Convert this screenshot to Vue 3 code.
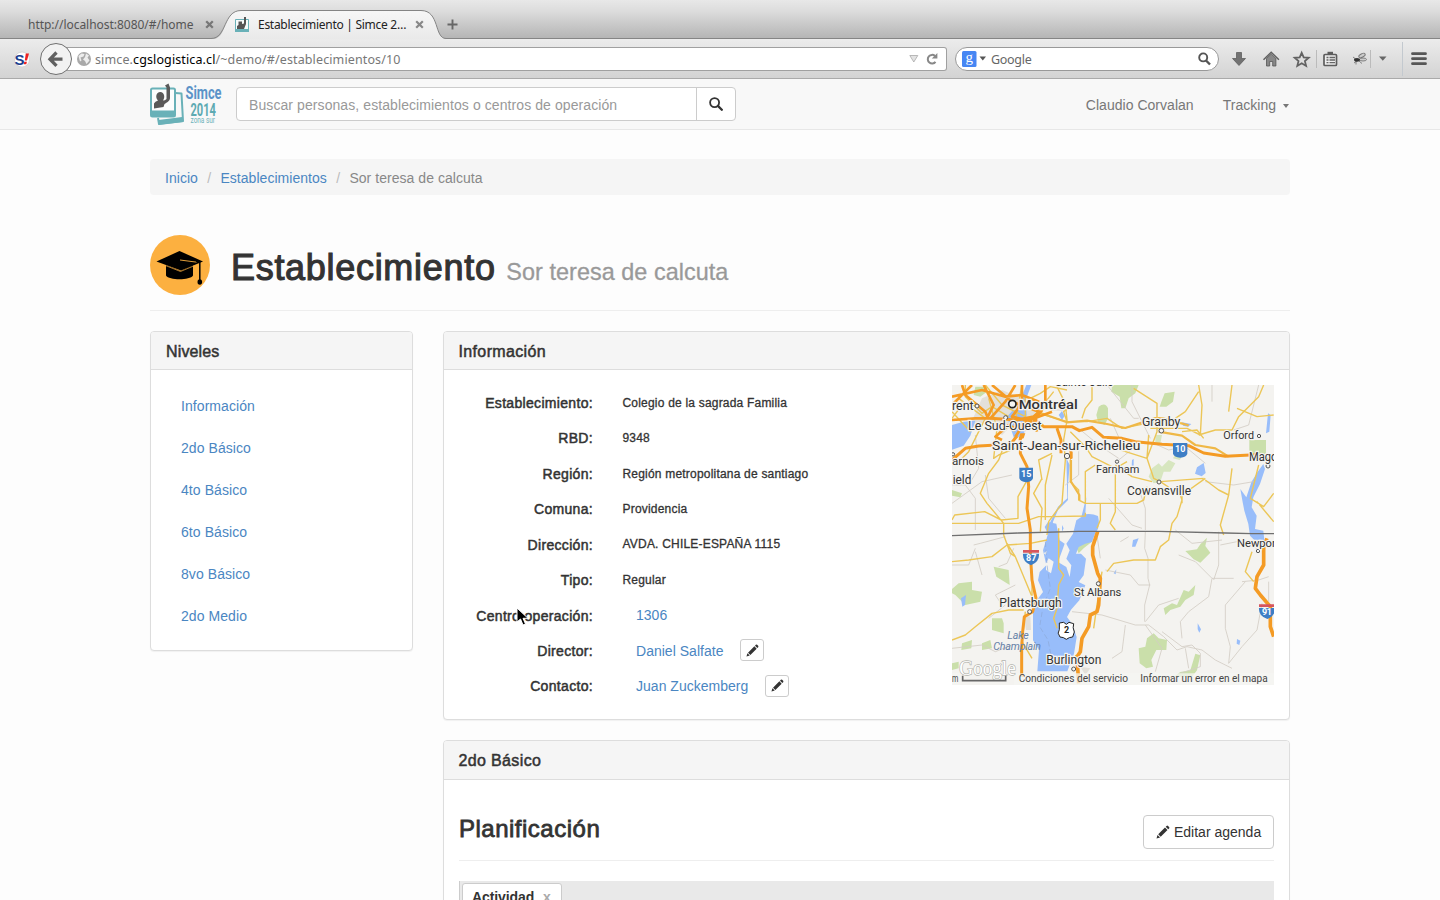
<script setup>
const levels = ['Información', '2do Básico', '4to Básico', '6to Básico', '8vo Básico', '2do Medio']
const facts = [
  { label: 'Establecimiento:', value: 'Colegio de la sagrada Familia' },
  { label: 'RBD:', value: '9348' },
  { label: 'Región:', value: 'Región metropolitana de santiago' },
  { label: 'Comuna:', value: 'Providencia' },
  { label: 'Dirección:', value: 'AVDA. CHILE-ESPAÑA 1115' },
  { label: 'Tipo:', value: 'Regular' },
  { label: 'Centro operación:', link: '1306' },
  { label: 'Director:', link: 'Daniel Salfate', edit: true },
  { label: 'Contacto:', link: 'Juan Zuckemberg', edit: true },
]
</script>

<template>
  <div class="screen">
    <header class="chrome">
      <div class="tabs">
        <svg class="tabshape" width="240" height="40" viewBox="0 0 240 40">
          <defs>
            <linearGradient id="tabfill" x1="0" y1="0" x2="0" y2="1">
              <stop offset="0" stop-color="#f7f7f7" /><stop offset="1" stop-color="#e9e9e9" />
            </linearGradient>
          </defs>
          <path d="M0 39.5V38.500H8C21 38.500 17 10.500 35 10.500H215C234 10.500 228 38.500 240 38.500V39.500Z" fill="url(#tabfill)" />
          <path d="M0 38.500H5C21 38.500 17 10.500 35 10.500H215C234 10.500 228 38.500 240 38.500" fill="none" stroke="#858585" />
        </svg>
        <span class="tab-one">http://localhost:8080/#/home</span>
        <svg class="x1" width="9" height="9" viewBox="0 0 9 9"><path d="M1.200 1.200l6.600 6.600M7.800 1.200L1.200 7.800" stroke="#777" stroke-width="2.300" /></svg>
        <svg class="fav" width="16" height="17" viewBox="0 0 16 17">
          <path d="M1.500 3.500h13v12h-13z" fill="#f6fbfb" stroke="#69b1b8" /><path d="M1 13h14v3H1z" fill="#69b1b8" />
          <path d="M3 13v-3l1.500-1V5.500h3.500V8l2-.5V1h2v7l-2 5z" fill="#555" />
        </svg>
        <span class="tab-two">Establecimiento | Simce 2…</span>
        <svg class="x2" width="9" height="9" viewBox="0 0 9 9"><path d="M1.200 1.200l6.600 6.600M7.800 1.200L1.200 7.800" stroke="#888" stroke-width="2.200" /></svg>
        <svg class="plus" width="11" height="11" viewBox="0 0 11 11"><path d="M5.500 .5v10M.5 5.500h10" stroke="#666" stroke-width="1.900" /></svg>
      </div>
      <div class="toolbar">
        <svg class="leftbar" width="96" height="40" viewBox="0 0 96 40">
          <circle cx="22" cy="20.500" r="7.500" fill="#fff" stroke="#ccc" stroke-width=".7" />
          <text x="14.500" y="25.500" font-family="Liberation Sans, sans-serif" font-weight="bold" font-size="15" fill="#1b3f8f">S</text>
          <path d="M25.800 14.500h3.200l-2 7h-2.200zM24.300 22.800h2.600l-.6 2.400h-2.600z" fill="#e22" />
          <path d="M60 8.500H96V31.500H60Z" fill="#fff" /><path d="M60 8.500H96M60 31.500H96" stroke="#a0a0a0" />
          <circle cx="56" cy="20" r="15.500" fill="#f2f2f2" stroke="#707070" />
          <path d="M62.500 20.200H51M56.500 13.500l-6.500 6.700 6.500 6.700" fill="none" stroke="#606060" stroke-width="3.300" />
          <circle cx="84" cy="20" r="7" fill="#a9a9a9" />
          <path d="M78.500 17l3-2.500 3 .5-1 2.500-3 1 1 3-1.500 1zM86 14.500l3 2-1.500 2 2 3-3 3.500-1.500-3-2-1.500 2-2.500z" fill="#ededed" />
        </svg>
        <div class="url">
          <span class="addr">simce.<b>cgslogistica.cl</b>/~demo/#/establecimientos/10</span>
          <svg width="32" height="16" viewBox="0 0 32 16">
            <path d="M.8 4.500h8L4.800 11z" fill="#e3e3e3" stroke="#aaa" stroke-width=".8" />
            <path d="M26.500 10.800A4.300 4.300 0 1 1 26 5" fill="none" stroke="#888" stroke-width="2" /><path d="M28.400 2v5.600h-5.600z" fill="#888" />
          </svg>
        </div>
        <div class="gsearch">
          <svg width="25" height="16" viewBox="0 0 25 16"><rect width="14.500" height="16" rx="1.500" fill="#4686f3" /><text x="3.500" y="11" font-family="Liberation Serif, serif" font-size="15" fill="#fff">g</text><path d="M17.500 5.500h6.500l-3.200 4z" fill="#555" /></svg>
          <span>Google</span>
          <svg class="glass" width="13" height="14" viewBox="0 0 13 14"><circle cx="5.200" cy="5.400" r="4" fill="none" stroke="#555" stroke-width="1.900" /><path d="M8 8.500l4 4" stroke="#555" stroke-width="2.400" /></svg>
        </div>
        <svg class="rightbar" width="215" height="40" viewBox="1225 39 215 40">
          <path d="M1236.500 52.500h5V58.500h4l-6.500 7-6.500-7h4z" fill="#727272" stroke="#555" stroke-width=".7" />
          <path d="M1266.500 58.500v7.500h3.200v-4.500h3v4.500h3.200v-7.500l-4.700-4.500z" fill="#888" stroke="#555" stroke-width=".8" /><path d="M1263.500 59.700l7.700-7.500 7.700 7.500" fill="none" stroke="#606060" stroke-width="1.500" />
          <path d="M1301.700 52.800l2 4.600 5 .4-3.800 3.300 1.200 4.800-4.400-2.600-4.400 2.600 1.200-4.800-3.800-3.300 5-.4z" fill="none" stroke="#626262" stroke-width="1.800" />
          <path d="M1316.500 50v18M1370.500 50v18" stroke="#bbb" />
          <rect x="1324" y="54.500" width="12.500" height="11" rx="1" fill="#eee" stroke="#5d5d5d" stroke-width="1.700" /><path d="M1327.500 51.800h5.500v3h-5.500z" fill="#5d5d5d" /><path d="M1326.500 57.500h2M1329.500 57.500h5.500M1326.500 60h2M1329.500 60h5.500M1326.500 62.700h2M1329.500 62.700h5.500" stroke="#666" stroke-width="1.300" />
          <g fill="none" stroke="#777" stroke-width=".9"><ellipse cx="1362" cy="55.500" rx="3.500" ry="1.700" transform="rotate(-28 1362 55.500)" fill="#ccc" /><ellipse cx="1363" cy="59.500" rx="3.500" ry="1.500" fill="#ccc" /><path d="M1353 57l4 3M1354 63l4-3M1359 61l3 2.500M1356 61v3.500" /></g><ellipse cx="1357" cy="59.800" rx="3" ry="1.900" fill="#333" />
          <path d="M1379 56.500h7.500l-3.700 4.200z" fill="#666" /><path d="M1402.500 42v34" stroke="#c3c9cf" />
          <path d="M1412.500 53.700h13M1412.500 58.700h13M1412.500 63.700h13" stroke="#565656" stroke-width="2.800" stroke-linecap="round" />
        </svg>
      </div>
    </header>

    <nav class="navbar">
      <svg class="logo" width="74" height="44" viewBox="0 0 74 44">
        <path d="M25.500 10L31.500 10.500 33 38 9 41 8 35" fill="none" stroke="#69b1b8" stroke-width="2" stroke-linejoin="round" />
        <path d="M8.500 37L32 34 33.300 39 9 41.700z" fill="#69b1b8" />
        <rect x="1" y="5.500" width="24" height="28" rx="1.500" fill="#fbfdfd" stroke="#69b1b8" stroke-width="2" /><path d="M1 27.500h24V34H1z" fill="#69b1b8" />
        <path d="M4 25.500V20.500q1-2 4-3c-3-3-2-8.500 2.300-8.500 4.200 0 5 5.500 2.700 8.500q2 0 3.500-1.500V4.500l-1.500-2 3.500-2L20 4.500V15c0 3-3 4.500-5.500 6l-1 3z" fill="#595959" />
        <g font-family="Roboto, sans-serif" font-weight="bold">
          <text x="35.500" y="16.200" font-size="18" textLength="36" lengthAdjust="spacingAndGlyphs" fill="#5b93c8">Simce</text>
          <text x="40.500" y="32.800" font-size="18" textLength="25.500" lengthAdjust="spacingAndGlyphs" fill="#5daab2">2014</text>
          <text x="40.500" y="40.300" font-size="8.500" font-weight="normal" textLength="24.500" lengthAdjust="spacingAndGlyphs" fill="#6db2b9">zona sur</text>
        </g>
      </svg>
      <div class="search">
        <span>Buscar personas, establecimientos o centros de operación</span>
        <div class="go"><svg width="14" height="14" viewBox="0 0 14 14"><circle cx="5.600" cy="5.600" r="4.500" fill="none" stroke="#333" stroke-width="1.800" /><path d="M8.900 8.900l3.900 3.900" stroke="#333" stroke-width="2.300" stroke-linecap="round" /></svg></div>
      </div>
      <div class="navlinks"><span>Claudio Corvalan</span><span>Tracking <i class="caret"></i></span></div>
    </nav>

    <main class="container">
      <div class="breadcrumb"><a>Inicio</a><i>/</i><a>Establecimientos</a><i>/</i><span>Sor teresa de calcuta</span></div>
      <div class="title">
        <svg width="60" height="60" viewBox="0 0 60 60">
          <circle cx="30" cy="30" r="30" fill="#fcb040" />
          <path d="M16 30l14.500 6L43 30v10.500C40 45.500 19 45.500 16 40.500z" fill="#000" />
          <path d="M6.500 26.500L29.500 16 53 26.500 31 35.500z" fill="#000" /><path d="M15.500 30.500l15 6 13-5.500" fill="none" stroke="#fcb040" stroke-width=".7" />
          <path d="M30 25l17 2.200" fill="none" stroke="#fcb040" stroke-width=".9" />
          <path d="M46 26.500l3.800 1V46" fill="none" stroke="#000" stroke-width="1.500" /><ellipse cx="49.800" cy="47" rx="2.300" ry="2.800" fill="#000" />
        </svg>
        <h1>Establecimiento <small>Sor teresa de calcuta</small></h1>
      </div>

      <div class="columns">
        <aside class="panel side">
          <div class="head niv">Niveles</div>
          <div class="levels"><a v-for="l in levels" :key="l">{{ l }}</a></div>
        </aside>
        <div class="content">
          <section class="panel info">
            <div class="head">Información</div>
            <div class="info-body">
              <dl>
                <div v-for="f in facts" :key="f.label" class="fact">
                  <dt>{{ f.label }}</dt>
                  <dd v-if="f.value">{{ f.value }}</dd>
                  <dd v-else class="linked"><a>{{ f.link }}</a>
                    <span v-if="f.edit" class="edit"><svg width="13" height="13" viewBox="0 0 14 14"><path d="M.5 13.500l1-3.600 2.600 2.600zM2.200 9.300l6.800-6.800 2.500 2.500-6.800 6.800zM9.700 1.800l.9-.9q.7-.6 1.400 0l1.100 1.100q.6.700 0 1.400l-.9.900z" fill="#333" /></svg></span>
                  </dd>
                </div>
              </dl>
              <svg class="map" width="322" height="300" viewBox="0 0 966 900">
                <rect width="966" height="900" fill="#f4f3f0" />
                <g fill="#cadfaa">
                  <path d="M70 5l35 0 0 15-20 15-20-5zM440 65q20-15 28 5l0 30-10 20-20-10-5-20zM480 0h80l-10 25-20 15-10 30-12 0-5-35-25-15zM0 315l30 10-5 12-25-5zM628 50l10-25 30-5-5 30-20 15-20 0zM892 165h50v40l-15 10-35-15zM125 545l45 10 3 45-40-25zM20 595l40-5 0 25 30 5-5 30-45 10-30-30-20-10zM120 700l30 0 5 15 0 30-35-10zM30 775l30-10-2 25-30 5zM90 775l25-10 5 25-30 5zM0 835l20-5 0 20-20 5zM370 480l30-20 20 10-25 20-15 15z" />
                  <path d="M700 498l35-5 10-15 20-20-5 25 15 20-30 30-20-10zM635 670l25-15 15 5 20-45 15 5 20-20-5 30-25 15-15 20-30 10-15 15zM560 790l20-5 5-25 20-15 15 15 25 5-2 30-30 0-15 30 5 20-20 5-20-15zM730 806l15 5-10 45-15 20-55 0 20-15 30-5z" />
                  <path d="M600 250l20-15 10 10 20-20 20 10-15 25-20 0-10 30-20 5-15-20zM610 150l20 0-5 25-15 0zM675 200l18 10-10 15-20-5z" opacity=".7" />
                </g>
                <g fill="#dedbd3"><path d="M90 40l60-25 60 25 60 40-50 60-40-20-30 30-50-40-50 20zM215 690l20 5 2 40-15 0zM385 845l30 5-15 20z" opacity=".8" /></g>
                <g fill="#98bdfa">
                  <path d="M0 120l35-10 35-3-15 45-20 30-35 12zM165 95l18-20 22 0 8-50 10-25h15l-17 45 3 45-8 60-30 10zM320 90l10-12 8 15-8 12z" />
                  <path d="M343 220l10 20-5 60 0 45-30 30-15 35-5 45-10 5 5-45 25-50 28-25z" />
                  <path d="M400 388q20-3 38 5 8 35-8 50l-10 28-20 5 -20 10-8 20 15 0 15 15-7 50-15 20 20 10-18 45-25 28-12 22 15 20 14 40-8 50-20 53H256l5-65-18-28v-105l30-40-15-35 5-25 20-20-10-45 15-50-10-20 10-15 25 5 10 50 15 10-20 55 25 15 10 30 5-35-15-20 10-25-10-20 20-30 10-40 15-10 15-60z" />
                  <path d="M27 640l15-10-3 30-8 5zM543 465l17-5-10 25-10 0zM735 247l20-13 6 30-12 10-20-8zM865 312l18 25 15-45 18-30 18-25 5 15-15 45-20 40-5 30 15 25-5 40 25 5 5 45-20-5-25-25-5-35-12-40-5-25zM948 85l8 5-4 50-10 5zM690 112l28 5-10 8-15-3zM540 225l5-3 0 20-6 0zM737 715l10 18-5 10-5-10zM855 762l10 5-3 13-8-4zM485 565l8-12-2 15zM330 420l5 10-5 10z" />
                </g>
                <g fill="#f4f3f0"><path d="M290 520l15 10-8 35-15-10 0-20zM275 505l10-8-3 12z" /></g>
                <path d="M280 470l5 70 10 70-22 55-10 60 25 40 10 50" fill="none" stroke="#8ca9d8" stroke-width="2" stroke-dasharray="16 8" />
                <g fill="none" stroke="#d2cdc4" stroke-width="2.500" stroke-linejoin="round">
                  <path d="M0 300l40 0 30 40v95M100 270l10 70 50 60M0 355l90-65 90-20M70 150l10 100-30 50M380 130l60 50 60 40M250 45l50 30 45 0M475 100l40 90M560 310l20 60v65M605 175l45 20 50-10 60 50M65 480l20-5 75-20M70 500l20 70M0 540l50 0 20-50M185 490l-20 45-25 10M110 700l50-40M150 660l-20-30 60-30M0 790l90-10 40 20 50-20" />
                  <path d="M580 440l-2 50 10 30 0 60 5 20-15 60 0 50M435 450l10 70M505 470l25-15M460 555l75 15 25 30 35 0M360 680l90 10 100 30 40 0 45 35 40 40 30-10 45 10 40 30 50 25M580 710l40-50 60-20M520 720l-10 80-30 20M580 720l50 70-20 70M630 740l60 45 30-5 25 25 0 40-60 20M700 790l10 60M680 510l50 20 50 50 65 0M780 580l-10 55-60 45-25 30 5 50M800 440l0 100-15 45M805 480l50-10 60 20M950 590l0 60M880 590l-60 70 0 70 15 55-5 50M830 835l40-50 45-50 15-80M870 590l50-5 30-10M670 435l50 40 90-10M760 290l85 10 60-10M540 0v50l55 110M465 0l80 100 15 0M780 0v50M920 0l-30 120-45 15M470 340l70 80 30 10M380 180v90l-40 30M500 225l50-40" />
                </g>
                <g fill="none" stroke="#ecc657" stroke-width="4.200" stroke-linejoin="round">
                  <path d="M0 405l8-15 90-10 50 25 50-5 0-65 25-45M0 415h200l60-20 40 0 100-2 0-10M0 530l50-5 70-10 45-35 70-5 50-10M155 450l0-35-50-60-20-30 25-60 30-40 15-40M155 450l20 55 15 10 50 120 5 40M165 475l25 40M0 765l40-15 30-25 50-40 50-10 45 0M270 280l-25 45 25 45-5 70M270 285l-10-60 40-20M300 210l-20 90 0 105M285 450l5-40 40-55 10-130-5-60 10-60-5-50-25-50 0-25M355 225l0 65 25 25 0 30 20 10h45l110 0 20-10 10-40M400 355v-95l30-20M355 140l45 45 20 30 70 35 35-20M445 355l0 50-10 25M490 250l0 130-15 35 15 20M320 460l0-30M320 460l0 90 15 20-15 30-5 70-10 30 10 30" />
                  <path d="M100 0l50 60 70 35 0-65M20 40l80 60-50 100-30 30M110 40l25 90-10 90 15-10 50-20M40 0l0 35 50 50 30-20 50 30M210 0l-15 80-10 60M225 45l40-20 30-20 50 10M260 85l85 25 60 0 60-10 45 30 100-20 30 0M390 100l10-30 20-25 0-45M345 110l-10-30 35-25M0 80l55 60M30 60L0 100M245 95l60-75M545 10l70 45 0 85-30 80 20 60 20 10 130-10M590 150l-5 70-95-30M595 130l50 0 60 0 40 20 5-90-10-60M700 80l40-60M700 80l-30 20-65 5M740 150l50-15 50 0 20-40 60-60 15-35M755 160l-20-25-45 5M625 290l60 40 5 15-15 50-15 20-10 50-25 20-15 40-65 0-60 10-20 25M690 330l70-50M690 325l0 30M760 285l40 30 30 15-25 90 10 30M830 330l10-80M840 0l-10 80M855 70l60 25 50-5M920 240l-25 100 40 25 30-40M915 350l50 60M900 500l-20 60 25 30M450 560l-15 100-10 70M240 560l0 90M220 680l-10 90 30 50M370 810l10 20M600 290l-60-15-50-35" />
                </g>
                <g fill="none" stroke="#efb847" stroke-width="6.500" stroke-linejoin="round"><path d="M255 80l90 32 60-5 60 10 55 12 90-30 20 0 80 22M620 140l70 12 40 28 60 10 40 25M357 225l0 65 25 40 0 15" /></g>
                <g fill="none" stroke="#f49b25" stroke-linejoin="round">
                  <path stroke-width="8" d="M0 105l70-5 45 0 45-50 30-50M0 60l40-40 20-20M30 0l10 30 60 50 10 25M0 35l90-20 70 20 50-5 75 30M210 0l0 55-30 40 60 15M280 0v60l-35 50 10 30M120 0l60 50 80 30M150 165l-20-10 40-35 20 10 40-25M95 0l30 60-20 40M190 155l30-45 80-30" />
                  <path stroke-width="9" d="M0 225l40-35 40-7 95-5 20-25M245 100l30 25 85 0 22 12 38-10 35 30 55 3 40 10 80 8 80 4 45 22 65 10 90-5 20 14h20M115 100l80 5 50-10 25-20M205 155v50l20 40 5 60-5 65 10 65v70l5 80 12 55-10 40-25 15-5 45-3 45 0 90M315 130l12 35v40" />
                  <path stroke-width="11" d="M437 440l-15 45 0 25 15 55 8 15-5 80-5 20-20 10-5 35-20 35-5 40-10 15 5 80M945 460l-10 25 0 55-20 35-5 35 15 20 30 35 0 60 10 30" />
                </g>
                <path d="M352 190l10 10v20l-8 5zM205 145l15 0-5 15-15 5z" fill="#f49b25" />
                <path d="M0 452l200-8 180-5 240 0 200 5 80 2h66" fill="none" stroke="#707070" stroke-width="4" />
                <g transform="translate(-6 -15)">
                  <g fill="#f5f4f1" stroke="#555" stroke-width="3"><circle cx="187" cy="72" r="11" stroke="#222" stroke-width="5" /><circle cx="167" cy="113" r="6" /><circle cx="351" cy="228" r="8" /><circle cx="81" cy="78" r="6" /><circle cx="9" cy="223" r="5" /><circle cx="634" cy="152" r="7" /><circle cx="627" cy="306" r="6" /><circle cx="501" cy="245" r="5" /><circle cx="927" cy="168" r="5" /><circle cx="954" cy="258" r="6" /><circle cx="239" cy="695" r="6" /><circle cx="445" cy="611" r="6" /><circle cx="371" cy="867" r="6" /><circle cx="924" cy="513" r="5" /></g>
                  <g fill="#3e7ec5"><path d="M208 263h41v32q-3 10-20 12-18-2-21-12zM669 189h43v32q-3 10-21 12-19-2-22-12zM219 521h48q2 25-24 35-26-10-24-35zM927 684h48q2 23-23 33-27-8-25-33z" /></g>
                  <path d="M219 510h48v8h-48zM927 673h48v8h-48z" fill="#d6565d" /><path d="M328 729l13-2 8 6 8-6 14 4q-4 12 2 25l-5 15q-10 0-19 7-9-7-19-7-10-12-2-22z" fill="#fff" stroke="#222" stroke-width="3" />
                  <g class="road" fill="#fff" font-size="27"><text x="213" y="291" textLength="31">15</text><text x="675" y="217" textLength="31">10</text><text x="228" y="543" textLength="31">87</text><text x="936" y="706" textLength="30">91</text><text x="342" y="760" fill="#222">2</text></g>
                  <g class="place">
                    <text x="206" y="87" font-size="41" textLength="177" lengthAdjust="spacingAndGlyphs" class="city">Montréal</text><text x="6" y="90" font-size="36" textLength="65" lengthAdjust="spacingAndGlyphs">rent</text><text x="54" y="150" font-size="36" textLength="221" lengthAdjust="spacingAndGlyphs">Le Sud-Ouest</text><text x="315" y="18" font-size="36" textLength="175" lengthAdjust="spacingAndGlyphs">Sainte-Julie</text>
                    <text x="126" y="211" font-size="39" textLength="445" lengthAdjust="spacingAndGlyphs">Saint-Jean-sur-Richelieu</text><text x="6" y="256" font-size="34" textLength="96" lengthAdjust="spacingAndGlyphs">arnois</text><text x="8" y="311" font-size="36" textLength="56" lengthAdjust="spacingAndGlyphs">ield</text><text x="438" y="280" font-size="35" textLength="130" lengthAdjust="spacingAndGlyphs">Farnham</text>
                    <text x="576" y="138" font-size="36" textLength="115" lengthAdjust="spacingAndGlyphs">Granby</text><text x="820" y="178" font-size="34" textLength="92" lengthAdjust="spacingAndGlyphs">Orford</text><text x="897" y="243" font-size="37" textLength="104" lengthAdjust="spacingAndGlyphs">Magog</text><text x="531" y="344" font-size="36" textLength="192" lengthAdjust="spacingAndGlyphs">Cowansville</text>
                    <text x="861" y="500" font-size="34" textLength="128" lengthAdjust="spacingAndGlyphs">Newport</text><text x="148" y="681" font-size="37" textLength="187" lengthAdjust="spacingAndGlyphs">Plattsburgh</text><text x="372" y="647" font-size="35" textLength="142" lengthAdjust="spacingAndGlyphs">St Albans</text><text x="289" y="851" font-size="36" textLength="165" lengthAdjust="spacingAndGlyphs">Burlington</text>
                  </g>
                  <g class="lake"><text x="172" y="778" textLength="64">Lake</text><text x="130" y="810" textLength="143">Champlain</text></g>
                  <path d="M192 880H972v35H192zM6 880h26v35H6z" fill="#f5f5f3" opacity=".75" />
                  <text x="28" y="884" font-family="Liberation Serif, serif" font-size="62" textLength="169" lengthAdjust="spacingAndGlyphs" fill="#fff" stroke="#b3b3ad" stroke-width="4" paint-order="stroke">Google</text>
                  <path d="M38 887v15h129v-15" fill="none" stroke="#666" stroke-width="5" />
                  <g class="legal"><text x="6" y="905" textLength="19" lengthAdjust="spacingAndGlyphs">m</text><text x="206" y="905" textLength="328" lengthAdjust="spacingAndGlyphs">Condiciones del servicio</text><text x="571" y="905" textLength="382" lengthAdjust="spacingAndGlyphs">Informar un error en el mapa</text></g>
                </g>
              </svg>
            </div>
          </section>
          <section class="panel plan">
            <div class="head basico">2do Básico</div>
            <div class="plan-body">
              <div class="plan-title"><h2>Planificación</h2>
                <div class="btn"><svg width="14" height="14" viewBox="0 0 14 14"><path d="M.5 13.500l1-3.600 2.600 2.600zM2.200 9.300l6.800-6.800 2.500 2.500-6.800 6.800zM9.700 1.800l.9-.9q.7-.6 1.400 0l1.100 1.100q.6.700 0 1.400l-.9.900z" fill="#333" /></svg><span>Editar agenda</span></div>
              </div>
              <div class="agenda"><div class="chip">Actividad <i>x</i></div></div>
            </div>
          </section>
        </div>
      </div>
    </main>
    <svg class="cursor" width="14" height="20" viewBox="0 0 14 20"><path d="M1 1v14l3.500-3 2.500 6 2.500-1-2.500-5.700h5z" fill="#000" stroke="#fff" stroke-width="1" /></svg>
  </div>
</template>

<style>
html, body { margin: 0; overflow: hidden; background: #fdfdfd; }
</style>
<style scoped>
* { box-sizing: border-box; }
.screen { position: relative; width: 1440px; height: 900px; overflow: hidden; font: 14px/20px "Liberation Sans", Arial, sans-serif; color: #333; background: #fdfdfd; }
a { color: #4a86c2; }
i { font-style: normal; }
svg { display: block; flex: none; }
.chrome { height: 79px; font: 12px/16px "Noto Sans", sans-serif; }
.tabs { position: relative; height: 39px; display: flex; align-items: center; padding: 11px 0 0 28px; background: linear-gradient(#e8e8e8, #dcdcdc 30%, #b5b5b5); border-bottom: 1px solid #858585; }
.tabshape { position: absolute; left: 206px; top: 0; }
.tabs > *:not(.tabshape) { position: relative; }
.tab-one { width: 177px; color: #555; letter-spacing: -.03px; white-space: nowrap; }
.fav { margin-left: 20px; }
.tab-two { width: 165px; margin-left: 8px; color: #222; letter-spacing: -.28px; white-space: nowrap; }
.x2 { margin-left: -8px; }
.plus { margin-left: 23px; }
.toolbar { height: 40px; display: flex; align-items: center; background: linear-gradient(#ececec, #d3d3d3); border-bottom: 1px solid #aaa; }
.url { width: 851px; height: 24px; border: 1px solid #a0a0a0; border-left: 0; border-radius: 0 3px 3px 0; background: #fff; display: flex; align-items: center; justify-content: space-between; padding-right: 5px; margin-top: 1px; }
.addr { color: #777; white-space: nowrap; font-size: 12.500px; letter-spacing: .12px; margin-left: -1px; padding-top: 1px; }
.addr b { color: #000; font-weight: 400; }
.gsearch { width: 264px; height: 24px; margin: 1px 0 0 8px; border: 1px solid #999; border-radius: 12px; background: #fff; display: flex; align-items: center; padding: 0 7px 0 6px; color: #666; }
.gsearch span { margin-left: 4px; font-size: 12.500px; letter-spacing: -.3px; padding-top: 1px; }
.glass { margin-left: auto; }
.rightbar { margin-left: 6px; }
.navbar { height: 51px; background: #f8f8f8; border-bottom: 1px solid #e7e7e7; display: flex; padding: 0 150px; }
.logo { margin-top: 4px; }
.search { width: 500px; height: 34px; margin: 8px 0 0 12px; border: 1px solid #ccc; border-radius: 4px; background: #fff; display: flex; justify-content: space-between; line-height: 34px; padding-left: 12px; color: #999; letter-spacing: .085px; }
.go { width: 39px; border-left: 1px solid #ccc; display: flex; align-items: center; justify-content: center; }
.navlinks { margin-left: auto; margin-right: 1px; display: flex; gap: 29px; color: #777; line-height: 52px; letter-spacing: .03px; }
.caret { display: inline-block; border: 3.500px solid transparent; border-top: 4px solid #777; border-bottom: 0; vertical-align: 2px; margin-left: 3px; }
.container { width: 1140px; margin: 29px auto 0; }
.breadcrumb { height: 36px; padding: 0 15px; border-radius: 4px; background: #f5f5f5; line-height: 38px; display: flex; color: #888; letter-spacing: .04px; }
.breadcrumb i { width: 22.500px; text-align: center; color: #bbb; }
.title { height: 116px; padding-top: 40px; border-bottom: 1px solid #eee; display: flex; }
h1 { margin: 13px 0 0 21px; font-size: 36px; line-height: 40px; font-weight: 400; letter-spacing: .7px; -webkit-text-stroke: 1.100px #333; white-space: nowrap; }
small { font-size: 23.400px; color: #999; letter-spacing: .05px; -webkit-text-stroke: .3px #999; }
.columns { display: flex; gap: 30px; margin-top: 20px; align-items: flex-start; }
.panel { border: 1px solid #ddd; border-radius: 4px; background: #fff; box-shadow: 0 1px 1px rgba(0,0,0,.05); overflow: hidden; }
.side { width: 263px; height: 320px; }
.head { height: 38px; padding-left: 14.500px; line-height: 39px; font-size: 16px; letter-spacing: .36px; -webkit-text-stroke: .5px #333; background: #f5f5f5; border-bottom: 1px solid #ddd; }
.niv { letter-spacing: .15px; padding-left: 15px; }
.basico { height: 39px; }
.levels { padding: 15px 30px; display: flex; flex-direction: column; }
.levels a { line-height: 42px; letter-spacing: .07px; }
.content { width: 847px; }
.info { height: 389px; }
.info-body { display: flex; justify-content: space-between; padding: 15px 15px 0; }
dl { margin: 0; }
.fact { height: 35.450px; display: grid; grid-template-columns: 134px auto; column-gap: 29.500px; align-items: center; }
dt { text-align: right; letter-spacing: .32px; -webkit-text-stroke: .5px #333; white-space: nowrap; padding-top: .5px; }
dd { margin: 0; font-size: 12px; letter-spacing: .2px; -webkit-text-stroke: .3px #333; white-space: nowrap; }
.linked { display: flex; align-items: center; padding-left: 13.500px; font-size: 14px; letter-spacing: .02px; -webkit-text-stroke: 0; }
.edit { width: 24px; height: 22px; margin: -1px 0 0 17px; border: 1px solid #ccc; border-radius: 3px; display: flex; align-items: center; justify-content: center; }
.road { font-family: Roboto, sans-serif; font-weight: 700; }
.place { font-family: Roboto, sans-serif; fill: #333; stroke: #f5f4f1; stroke-width: 7px; paint-order: stroke; }
.city { font-weight: 500; }
.lake { font: italic 32px Roboto, sans-serif; fill: #6681a7; }
.legal { font: 32px Roboto, sans-serif; fill: #444; }
.plan { margin-top: 20px; height: 240px; }
.plan-body { padding: 0 15px; }
.plan-title { height: 81px; border-bottom: 1px solid #eee; display: flex; justify-content: space-between; padding-top: 35px; }
h2 { margin: 0; font-size: 24px; line-height: 28px; font-weight: 400; letter-spacing: .5px; -webkit-text-stroke: .8px #333; }
.btn { width: 131px; height: 34px; border: 1px solid #ccc; border-radius: 4px; display: flex; align-items: center; gap: 4px; padding-left: 12px; white-space: nowrap; }
.agenda { height: 60px; margin-top: 20px; background: #e9e9e9; border-left: 1px solid #ccc; padding: 2px; }
.chip { width: 100px; height: 35px; border: 1px solid #ccc; border-radius: 3px; background: #fff; padding: 3px 9px; font-weight: 700; line-height: 21px; letter-spacing: -.1px; white-space: nowrap; }
.chip i { color: #aaa; margin-left: 5px; }
.cursor { position: absolute; left: 516px; top: 607px; }
</style>
